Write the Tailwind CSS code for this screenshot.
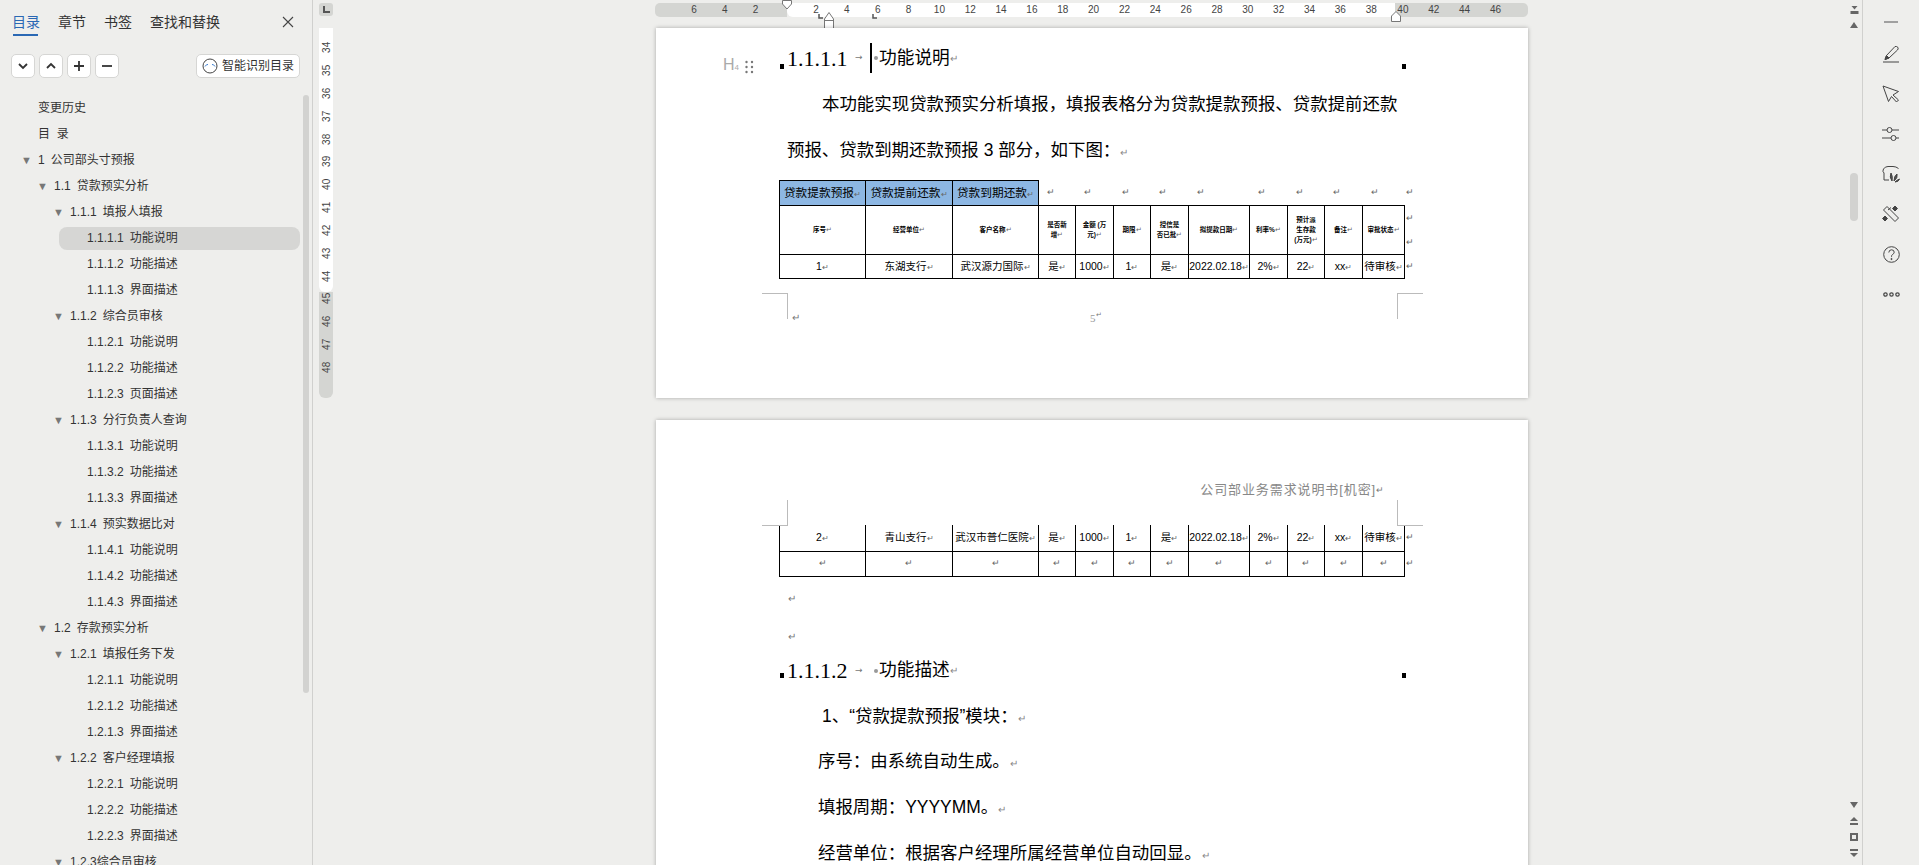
<!DOCTYPE html>
<html lang="zh-CN">
<head>
<meta charset="UTF-8">
<title>公司部业务需求说明书</title>
<script src="https://cdn.jsdelivr.net/npm/@tailwindcss/browser@4"></script>
</head>
<body class="bg-[#eeeeec] text-[#333] [font-family:'Liberation_Sans','Noto_Sans_CJK_SC',sans-serif]">
<div class="flex h-[865px] w-[1919px] overflow-hidden">

  <!-- left outline panel -->
  <aside class="relative w-[313px] shrink-0 border-r border-[#d0d0ce] overflow-hidden">
    <div class="flex h-[36px] gap-[18px] pl-[12px] text-[14px]">
      <div class="relative pt-[12px] leading-[20px] text-[#2a68b4]">目录<div class="absolute left-[1px] right-[2px] bottom-0 h-[2px] bg-[#2a68b4]"></div></div>
      <div class="pt-[12px] leading-[20px]">章节</div>
      <div class="pt-[12px] leading-[20px]">书签</div>
      <div class="pt-[12px] leading-[20px]">查找和替换</div>
      <svg class="ml-[44px] mt-[16px]" width="12" height="12" viewBox="0 0 12 12"><path d="M1 1L11 11M11 1L1 11" stroke="#444" stroke-width="1.1"/></svg>
    </div>
    <div class="mt-[18px] flex h-[24px] pl-[11px] pr-[12px] gap-[4px]">
      <div class="flex w-[24px] items-center justify-center rounded-[5px] border border-[#d6d6d4] bg-white"><svg width="12" height="12" viewBox="0 0 12 12"><path d="M2 4L6 8L10 4" fill="none" stroke="#333" stroke-width="1.8"/></svg></div>
      <div class="flex w-[24px] items-center justify-center rounded-[5px] border border-[#d6d6d4] bg-white"><svg width="12" height="12" viewBox="0 0 12 12"><path d="M2 8L6 4L10 8" fill="none" stroke="#333" stroke-width="1.8"/></svg></div>
      <div class="flex w-[24px] items-center justify-center rounded-[5px] border border-[#d6d6d4] bg-white"><svg width="12" height="12" viewBox="0 0 12 12"><path d="M1 6H11M6 1V11" stroke="#333" stroke-width="1.8"/></svg></div>
      <div class="flex w-[24px] items-center justify-center rounded-[5px] border border-[#d6d6d4] bg-white"><svg width="12" height="12" viewBox="0 0 12 12"><path d="M1 6H11" stroke="#333" stroke-width="1.8"/></svg></div>
      <div class="ml-auto flex w-[104px] items-center gap-[4px] rounded-[5px] border border-[#d6d6d4] bg-white pl-[5px] text-[12px]">
        <svg width="16" height="16" viewBox="0 0 16 16"><circle cx="8" cy="8" r="7" fill="none" stroke="#444" stroke-width="1"/><path d="M3 8.5Q4.5 6 6 6.5M10 6.5Q11.5 6 13 8.5" fill="none" stroke="#3d7fd0" stroke-width="1"/></svg>
        <span>智能识别目录</span>
      </div>
    </div>
    <div class="mt-[17px] text-[12px]">
      <div class="flex h-[26.02px] items-center pl-[38px]">变更历史</div>
      <div class="flex h-[26.02px] items-center pl-[38px]">目&nbsp;&nbsp;录</div>
      <div class="flex h-[26.02px] items-center pl-[21px]"><span class="mr-[6px] w-[11px] text-center text-[11px] text-[#777]">▼</span><span class="mr-[6px]">1</span>公司部头寸预报</div>
      <div class="flex h-[26.02px] items-center pl-[37px]"><span class="mr-[6px] w-[11px] text-center text-[11px] text-[#777]">▼</span><span class="mr-[6px]">1.1</span>贷款预实分析</div>
      <div class="flex h-[26.02px] items-center pl-[53px]"><span class="mr-[6px] w-[11px] text-center text-[11px] text-[#777]">▼</span><span class="mr-[6px]">1.1.1</span>填报人填报</div>
      <div class="flex h-[26.02px] items-center"><div class="ml-[59px] flex h-[23px] w-[241px] items-center rounded-lg bg-[#d6d6d4] pl-[28px]"><span class="mr-[6px]">1.1.1.1</span>功能说明</div></div>
      <div class="flex h-[26.02px] items-center pl-[87px]"><span class="mr-[6px]">1.1.1.2</span>功能描述</div>
      <div class="flex h-[26.02px] items-center pl-[87px]"><span class="mr-[6px]">1.1.1.3</span>界面描述</div>
      <div class="flex h-[26.02px] items-center pl-[53px]"><span class="mr-[6px] w-[11px] text-center text-[11px] text-[#777]">▼</span><span class="mr-[6px]">1.1.2</span>综合员审核</div>
      <div class="flex h-[26.02px] items-center pl-[87px]"><span class="mr-[6px]">1.1.2.1</span>功能说明</div>
      <div class="flex h-[26.02px] items-center pl-[87px]"><span class="mr-[6px]">1.1.2.2</span>功能描述</div>
      <div class="flex h-[26.02px] items-center pl-[87px]"><span class="mr-[6px]">1.1.2.3</span>页面描述</div>
      <div class="flex h-[26.02px] items-center pl-[53px]"><span class="mr-[6px] w-[11px] text-center text-[11px] text-[#777]">▼</span><span class="mr-[6px]">1.1.3</span>分行负责人查询</div>
      <div class="flex h-[26.02px] items-center pl-[87px]"><span class="mr-[6px]">1.1.3.1</span>功能说明</div>
      <div class="flex h-[26.02px] items-center pl-[87px]"><span class="mr-[6px]">1.1.3.2</span>功能描述</div>
      <div class="flex h-[26.02px] items-center pl-[87px]"><span class="mr-[6px]">1.1.3.3</span>界面描述</div>
      <div class="flex h-[26.02px] items-center pl-[53px]"><span class="mr-[6px] w-[11px] text-center text-[11px] text-[#777]">▼</span><span class="mr-[6px]">1.1.4</span>预实数据比对</div>
      <div class="flex h-[26.02px] items-center pl-[87px]"><span class="mr-[6px]">1.1.4.1</span>功能说明</div>
      <div class="flex h-[26.02px] items-center pl-[87px]"><span class="mr-[6px]">1.1.4.2</span>功能描述</div>
      <div class="flex h-[26.02px] items-center pl-[87px]"><span class="mr-[6px]">1.1.4.3</span>界面描述</div>
      <div class="flex h-[26.02px] items-center pl-[37px]"><span class="mr-[6px] w-[11px] text-center text-[11px] text-[#777]">▼</span><span class="mr-[6px]">1.2</span>存款预实分析</div>
      <div class="flex h-[26.02px] items-center pl-[53px]"><span class="mr-[6px] w-[11px] text-center text-[11px] text-[#777]">▼</span><span class="mr-[6px]">1.2.1</span>填报任务下发</div>
      <div class="flex h-[26.02px] items-center pl-[87px]"><span class="mr-[6px]">1.2.1.1</span>功能说明</div>
      <div class="flex h-[26.02px] items-center pl-[87px]"><span class="mr-[6px]">1.2.1.2</span>功能描述</div>
      <div class="flex h-[26.02px] items-center pl-[87px]"><span class="mr-[6px]">1.2.1.3</span>界面描述</div>
      <div class="flex h-[26.02px] items-center pl-[53px]"><span class="mr-[6px] w-[11px] text-center text-[11px] text-[#777]">▼</span><span class="mr-[6px]">1.2.2</span>客户经理填报</div>
      <div class="flex h-[26.02px] items-center pl-[87px]"><span class="mr-[6px]">1.2.2.1</span>功能说明</div>
      <div class="flex h-[26.02px] items-center pl-[87px]"><span class="mr-[6px]">1.2.2.2</span>功能描述</div>
      <div class="flex h-[26.02px] items-center pl-[87px]"><span class="mr-[6px]">1.2.2.3</span>界面描述</div>
      <div class="flex h-[26.02px] items-center pl-[53px]"><span class="mr-[6px] w-[11px] text-center text-[11px] text-[#777]">▼</span>1.2.3综合员审核</div>
    </div>
    <div class="absolute left-[303px] top-[95px] h-[598px] w-[6px] rounded-full bg-[#d2d2d0]"></div>
  </aside>

  <!-- vertical ruler -->
  <div class="ml-[6px] w-[14px] shrink-0 pt-[3px] text-[10px] text-[#444]">
    <div class="flex h-[13px] items-center justify-center rounded-[3px] bg-[#d4d5d2]"><svg width="7" height="7" viewBox="0 0 7 7"><path d="M1 0V6H7" fill="none" stroke="#555" stroke-width="2"/></svg></div>
    <div class="mt-[12px] flex h-[264px] flex-col items-center overflow-hidden rounded-b-[6px] bg-white pt-[8px]">
      <div class="flex h-[22.9px] shrink-0 items-center justify-center [writing-mode:vertical-rl] rotate-180">34</div>
      <div class="flex h-[22.9px] shrink-0 items-center justify-center [writing-mode:vertical-rl] rotate-180">35</div>
      <div class="flex h-[22.9px] shrink-0 items-center justify-center [writing-mode:vertical-rl] rotate-180">36</div>
      <div class="flex h-[22.9px] shrink-0 items-center justify-center [writing-mode:vertical-rl] rotate-180">37</div>
      <div class="flex h-[22.9px] shrink-0 items-center justify-center [writing-mode:vertical-rl] rotate-180">38</div>
      <div class="flex h-[22.9px] shrink-0 items-center justify-center [writing-mode:vertical-rl] rotate-180">39</div>
      <div class="flex h-[22.9px] shrink-0 items-center justify-center [writing-mode:vertical-rl] rotate-180">40</div>
      <div class="flex h-[22.9px] shrink-0 items-center justify-center [writing-mode:vertical-rl] rotate-180">41</div>
      <div class="flex h-[22.9px] shrink-0 items-center justify-center [writing-mode:vertical-rl] rotate-180">42</div>
      <div class="flex h-[22.9px] shrink-0 items-center justify-center [writing-mode:vertical-rl] rotate-180">43</div>
      <div class="flex h-[22.9px] shrink-0 items-center justify-center [writing-mode:vertical-rl] rotate-180">44</div>
    </div>
    <div class="flex h-[106px] flex-col items-center rounded-b-[6px] bg-[#d4d5d2]">
      <div class="-mt-[5px] flex h-[22.9px] shrink-0 items-center justify-center [writing-mode:vertical-rl] rotate-180">45</div>
      <div class="flex h-[22.9px] shrink-0 items-center justify-center [writing-mode:vertical-rl] rotate-180">46</div>
      <div class="flex h-[22.9px] shrink-0 items-center justify-center [writing-mode:vertical-rl] rotate-180">47</div>
      <div class="flex h-[22.9px] shrink-0 items-center justify-center [writing-mode:vertical-rl] rotate-180">48</div>
    </div>
  </div>

  <!-- document area -->
  <main class="min-w-0 flex-1 overflow-hidden pl-[323px] pt-[3px]">
    <div class="relative -ml-[1px] flex h-[14px] w-[873px] text-[10px] leading-[14px] text-[#444]">
      <div class="flex w-[132px] rounded-l-[5px] bg-[#d4d5d2] pl-[23.5px] text-center">
        <span class="w-[30.85px]">6</span><span class="w-[30.85px]">4</span><span class="w-[30.85px]">2</span>
      </div>
      <div class="flex w-[608px] rounded-l-[6px] bg-white pl-[13.6px] text-center">
        <span class="w-[30.85px] shrink-0">2</span><span class="w-[30.85px] shrink-0">4</span><span class="w-[30.85px] shrink-0">6</span><span class="w-[30.85px] shrink-0">8</span><span class="w-[30.85px] shrink-0">10</span><span class="w-[30.85px] shrink-0">12</span><span class="w-[30.85px] shrink-0">14</span><span class="w-[30.85px] shrink-0">16</span><span class="w-[30.85px] shrink-0">18</span><span class="w-[30.85px] shrink-0">20</span><span class="w-[30.85px] shrink-0">22</span><span class="w-[30.85px] shrink-0">24</span><span class="w-[30.85px] shrink-0">26</span><span class="w-[30.85px] shrink-0">28</span><span class="w-[30.85px] shrink-0">30</span><span class="w-[30.85px] shrink-0">32</span><span class="w-[30.85px] shrink-0">34</span><span class="w-[30.85px] shrink-0">36</span><span class="w-[30.85px] shrink-0">38</span>
      </div>
      <div class="flex flex-1 rounded-r-[5px] bg-[#d4d5d2] text-center">
        <span class="-ml-[7.5px] w-[30.85px] shrink-0">40</span><span class="w-[30.85px] shrink-0">42</span><span class="w-[30.85px] shrink-0">44</span><span class="w-[30.85px] shrink-0">46</span>
      </div>
      <!-- indent markers -->
      <svg class="absolute left-[126px] -top-[3px]" width="12" height="10" viewBox="0 0 12 10"><path d="M1.5 .5H10.5V4L6 9L1.5 4Z" fill="#fff" stroke="#777"/></svg>
      <svg class="absolute left-[163px] top-[11px]" width="5" height="5" viewBox="0 0 5 5"><path d="M1 0V4H5" fill="none" stroke="#555" stroke-width="1.5"/></svg>
      <svg class="absolute left-[168px] top-[8px]" width="12" height="19" viewBox="0 0 12 19"><path d="M1.5 8L6 1.5L10.5 8V18H1.5ZM1.5 9.5H10.5" fill="#fff" stroke="#777"/></svg>
      <svg class="absolute left-[217px] top-[11px]" width="5" height="5" viewBox="0 0 5 5"><path d="M1 0V4H5" fill="none" stroke="#555" stroke-width="1.5"/></svg>
      <svg class="absolute left-[735px] top-[8px]" width="12" height="11" viewBox="0 0 12 11"><path d="M1.5 10.5V5L6 .5L10.5 5V10.5Z" fill="#fff" stroke="#777"/></svg>
    </div>

    <!-- page 1 -->
    <section class="relative mt-[11px] h-[370px] w-[872px] bg-white pl-[131px] pt-[12px] shadow-[0_0_4px_rgba(0,0,0,0.3)]">
      <div class="absolute left-[67px] top-[29px] flex items-center gap-[6px]">
        <span class="font-light text-[16px] leading-[16px] text-[#aaa]">H<span class="text-[8px]">4</span></span>
        <svg width="9" height="14" viewBox="0 0 9 14"><g fill="#777"><circle cx="1.5" cy="2" r="1.2"/><circle cx="7" cy="2" r="1.2"/><circle cx="1.5" cy="7" r="1.2"/><circle cx="7" cy="7" r="1.2"/><circle cx="1.5" cy="12" r="1.2"/><circle cx="7" cy="12" r="1.2"/></g></svg>
      </div>
      <div class="flex h-[36px] items-center text-black">
        <span class="w-[65px] [font-family:'Liberation_Serif',serif] text-[22px]">1.1.1.1</span>
        <span class="w-[18px] pl-[3px] text-[9px] text-[#777] [font-family:'DejaVu_Sans',sans-serif]">→</span>
        <span class="h-[30px] w-[2px] bg-black"></span>
        <span class="ml-[2px] mr-[1px] h-[4px] w-[4px] rounded-full bg-[#999]"></span>
        <span class="text-[17.7px]">功能说明</span><span class="text-[10px] text-[#888]">↵</span>
      </div>
      <div class="h-[5px]"></div>
      <p class="w-[620px] text-[17.45px] leading-[46px] text-black [text-indent:35px]">本功能实现贷款预实分析填报，填报表格分为贷款提款预报、贷款提前还款预报、贷款到期还款预报 3 部分，如下图：<span class="text-[10px] leading-none text-[#888]">↵</span></p>
      <table class="-ml-[8px] mt-[7px] w-[641px] table-fixed border-collapse text-center text-black">
        <colgroup><col class="w-[86px]"><col class="w-[87px]"><col class="w-[86px]"><col class="w-[37px]"><col class="w-[38px]"><col class="w-[37px]"><col class="w-[38px]"><col class="w-[61px]"><col class="w-[38px]"><col class="w-[37px]"><col class="w-[38px]"><col class="w-[42px]"><col class="w-[16px]"></colgroup>
        <tr class="h-[25px] text-[11.7px] whitespace-nowrap">
          <td class="overflow-hidden border border-black bg-[#8db7e3]">贷款提款预报<span class="text-[8px] text-[#666]">↵</span></td>
          <td class="overflow-hidden border border-black bg-[#8db7e3]">贷款提前还款<span class="text-[8px] text-[#666]">↵</span></td>
          <td class="overflow-hidden border border-black bg-[#8db7e3]">贷款到期还款<span class="text-[8px] text-[#666]">↵</span></td>
          <td class="pl-[8px] text-left text-[9px] text-[#666]">↵</td>
          <td class="pl-[8px] text-left text-[9px] text-[#666]">↵</td>
          <td class="pl-[8px] text-left text-[9px] text-[#666]">↵</td>
          <td class="pl-[8px] text-left text-[9px] text-[#666]">↵</td>
          <td class="pl-[8px] text-left text-[9px] text-[#666]">↵</td>
          <td class="pl-[8px] text-left text-[9px] text-[#666]">↵</td>
          <td class="pl-[8px] text-left text-[9px] text-[#666]">↵</td>
          <td class="pl-[8px] text-left text-[9px] text-[#666]">↵</td>
          <td class="pl-[8px] text-left text-[9px] text-[#666]">↵</td>
          <td class="pl-[1px] text-left text-[9px] text-[#666]">↵</td>
        </tr>
        <tr class="h-[49px] text-[6.5px] font-bold leading-[10px]">
          <td class="border border-black">序号<span class="font-normal text-[#666]">↵</span></td>
          <td class="border border-black">经营单位<span class="font-normal text-[#666]">↵</span></td>
          <td class="border border-black">客户名称<span class="font-normal text-[#666]">↵</span></td>
          <td class="border border-black">是否新<br>增<span class="font-normal text-[#666]">↵</span></td>
          <td class="border border-black">金额 (万<br>元)<span class="font-normal text-[#666]">↵</span></td>
          <td class="border border-black">期限<span class="font-normal text-[#666]">↵</span></td>
          <td class="border border-black">授信是<br>否已批<span class="font-normal text-[#666]">↵</span></td>
          <td class="border border-black">拟提款日期<span class="font-normal text-[#666]">↵</span></td>
          <td class="border border-black">利率%<span class="font-normal text-[#666]">↵</span></td>
          <td class="border border-black">预计派<br>生存款<br>(万元)<span class="font-normal text-[#666]">↵</span></td>
          <td class="border border-black">备注<span class="font-normal text-[#666]">↵</span></td>
          <td class="border border-black">审批状态<span class="font-normal text-[#666]">↵</span></td>
          <td class="pl-[1px] text-left text-[9px] font-normal leading-[24px] text-[#666]">↵<br>↵</td>
        </tr>
        <tr class="h-[24px] text-[10.5px] whitespace-nowrap">
          <td class="border border-black">1<span class="text-[8px] text-[#666]">↵</span></td>
          <td class="border border-black">东湖支行<span class="text-[8px] text-[#666]">↵</span></td>
          <td class="border border-black">武汉源力国际<span class="text-[8px] text-[#666]">↵</span></td>
          <td class="border border-black">是<span class="text-[8px] text-[#666]">↵</span></td>
          <td class="border border-black">1000<span class="text-[8px] text-[#666]">↵</span></td>
          <td class="border border-black">1<span class="text-[8px] text-[#666]">↵</span></td>
          <td class="border border-black">是<span class="text-[8px] text-[#666]">↵</span></td>
          <td class="border border-black">2022.02.18<span class="text-[8px] text-[#666]">↵</span></td>
          <td class="border border-black">2%<span class="text-[8px] text-[#666]">↵</span></td>
          <td class="border border-black">22<span class="text-[8px] text-[#666]">↵</span></td>
          <td class="border border-black">xx<span class="text-[8px] text-[#666]">↵</span></td>
          <td class="overflow-hidden border border-black">待审核<span class="text-[8px] text-[#666]">↵</span></td>
          <td class="pl-[1px] text-left text-[9px] text-[#666]">↵</td>
        </tr>
      </table>
      <div class="mt-[31px] flex w-[620px] text-[10px] text-[#777]"><span class="ml-[5px]">↵</span><span class="ml-[290px] [font-family:'Liberation_Serif',serif] text-[11px] text-[#999]">5</span><span class="text-[7px]">↵</span></div>
      <!-- crop marks -->
      <div class="absolute left-[106px] top-[265px] h-[26px] w-[26px] border-r border-t border-[#bbb]"></div>
      <div class="absolute left-[741px] top-[265px] h-[26px] w-[26px] border-l border-t border-[#bbb]"></div>
      <div class="absolute left-[124px] top-[36px] h-[5px] w-[4px] bg-black"></div>
      <div class="absolute left-[746px] top-[36px] h-[5px] w-[4px] bg-black"></div>
    </section>

    <!-- page 2 -->
    <section class="relative mt-[22px] h-[500px] w-[872px] bg-white pl-[123px] shadow-[0_0_4px_rgba(0,0,0,0.3)]">
      <div class="flex h-[105px] w-[606px] justify-end pt-[60px] text-[13px] leading-[20px] tracking-[0.9px] text-[#888]">公司部业务需求说明书[机密]<span class="text-[9px] text-[#777]">↵</span></div>
      <table class="w-[641px] table-fixed border-collapse text-center text-black">
        <colgroup><col class="w-[86px]"><col class="w-[87px]"><col class="w-[86px]"><col class="w-[37px]"><col class="w-[38px]"><col class="w-[37px]"><col class="w-[38px]"><col class="w-[61px]"><col class="w-[38px]"><col class="w-[37px]"><col class="w-[38px]"><col class="w-[42px]"><col class="w-[16px]"></colgroup>
        <tr class="h-[26px] text-[10.5px] whitespace-nowrap">
          <td class="border border-t-0 border-black">2<span class="text-[8px] text-[#666]">↵</span></td>
          <td class="border border-t-0 border-black">青山支行<span class="text-[8px] text-[#666]">↵</span></td>
          <td class="border border-t-0 border-black">武汉市普仁医院<span class="text-[8px] text-[#666]">↵</span></td>
          <td class="border border-t-0 border-black">是<span class="text-[8px] text-[#666]">↵</span></td>
          <td class="border border-t-0 border-black">1000<span class="text-[8px] text-[#666]">↵</span></td>
          <td class="border border-t-0 border-black">1<span class="text-[8px] text-[#666]">↵</span></td>
          <td class="border border-t-0 border-black">是<span class="text-[8px] text-[#666]">↵</span></td>
          <td class="border border-t-0 border-black">2022.02.18<span class="text-[8px] text-[#666]">↵</span></td>
          <td class="border border-t-0 border-black">2%<span class="text-[8px] text-[#666]">↵</span></td>
          <td class="border border-t-0 border-black">22<span class="text-[8px] text-[#666]">↵</span></td>
          <td class="border border-t-0 border-black">xx<span class="text-[8px] text-[#666]">↵</span></td>
          <td class="overflow-hidden border border-t-0 border-black">待审核<span class="text-[8px] text-[#666]">↵</span></td>
          <td class="pl-[1px] text-left text-[9px] text-[#666]">↵</td>
        </tr>
        <tr class="h-[25px] text-[9px] text-[#666]">
          <td class="border border-black">↵</td><td class="border border-black">↵</td><td class="border border-black">↵</td><td class="border border-black">↵</td><td class="border border-black">↵</td><td class="border border-black">↵</td><td class="border border-black">↵</td><td class="border border-black">↵</td><td class="border border-black">↵</td><td class="border border-black">↵</td><td class="border border-black">↵</td><td class="border border-black">↵</td>
          <td class="pl-[1px] text-left">↵</td>
        </tr>
      </table>
      <div class="pl-[9px] text-[10px] text-[#777]">
        <div class="flex h-[29px] items-end">↵</div>
        <div class="flex h-[38px] items-end">↵</div>
      </div>
      <div class="mt-[9px] flex h-[36px] items-center pl-[8px] text-black">
        <span class="w-[65px] [font-family:'Liberation_Serif',serif] text-[22px]">1.1.1.2</span>
        <span class="w-[18px] pl-[3px] text-[9px] text-[#777] [font-family:'DejaVu_Sans',sans-serif]">→</span>
        <span class="w-[2px]"></span>
        <span class="ml-[2px] mr-[1px] h-[4px] w-[4px] rounded-full bg-[#999]"></span>
        <span class="text-[17.7px]">功能描述</span><span class="text-[10px] text-[#888]">↵</span>
      </div>
      <div class="mt-[5px] text-[17.45px] leading-[45.7px] text-black">
        <div class="pl-[43px]">1、“贷款提款预报”模块：<span class="text-[10px] leading-none text-[#888]">↵</span></div>
        <div class="pl-[39px]">序号：由系统自动生成。<span class="text-[10px] leading-none text-[#888]">↵</span></div>
        <div class="pl-[39px]">填报周期：YYYYMM。<span class="text-[10px] leading-none text-[#888]">↵</span></div>
        <div class="pl-[39px]">经营单位：根据客户经理所属经营单位自动回显。<span class="text-[10px] leading-none text-[#888]">↵</span></div>
      </div>
      <!-- crop marks -->
      <div class="absolute left-[106px] top-[80px] h-[26px] w-[26px] border-r border-b border-[#bbb]"></div>
      <div class="absolute left-[741px] top-[80px] h-[26px] w-[26px] border-l border-b border-[#bbb]"></div>
      <div class="absolute left-[124px] top-[253px] h-[5px] w-[4px] bg-black"></div>
      <div class="absolute left-[746px] top-[253px] h-[5px] w-[4px] bg-black"></div>
    </section>
  </main>

  <!-- document scrollbar -->
  <div class="flex w-[16px] shrink-0 flex-col items-center">
    <svg class="mt-[6px]" width="9" height="9" viewBox="0 0 9 9"><path d="M1.5 0H7.5L4.5 3.5ZM.5 5H8.5V8H.5Z" fill="#666"/></svg>
    <svg class="mt-[7px]" width="8" height="6" viewBox="0 0 8 6"><path d="M4 0L8 6H0Z" fill="#666"/></svg>
    <div class="mt-[145px] h-[48px] w-[8px] rounded-full bg-[#d2d2d0]"></div>
    <svg class="mt-auto" width="8" height="6" viewBox="0 0 8 6"><path d="M0 0H8L4 6Z" fill="#666"/></svg>
    <svg class="mt-[9px]" width="8" height="9" viewBox="0 0 8 9"><path d="M4 0L8 4H0ZM0 6H8V8H0Z" fill="#666"/></svg>
    <svg class="mt-[7px]" width="8" height="8" viewBox="0 0 8 8"><rect x="1" y="1" width="6" height="6" fill="none" stroke="#666" stroke-width="2"/></svg>
    <svg class="mb-[8px] mt-[7px]" width="8" height="9" viewBox="0 0 8 9"><path d="M0 1H8V3H0ZM0 5H8L4 9Z" fill="#666"/></svg>
  </div>

  <!-- right rail -->
  <div class="flex w-[57px] shrink-0 flex-col items-center border-l border-[#d0d0ce]">
    <div class="flex h-[34px] items-start pt-[21px]"><div class="h-[2px] w-[14px] bg-[#a0a0a0]"></div></div>
    <div class="flex h-[40px] items-center"><svg width="18" height="18" viewBox="0 0 18 18" fill="none" stroke="#444"><path d="M1 17H17M3 14.5L4.5 10.5L13 1.5Q14.5 1 16 2.5Q16.5 4 15.5 5L7 13Z"/><path d="M3 14.5L7 13L4.5 10.5Z" fill="#444"/></svg></div>
    <div class="flex h-[40px] items-center"><svg width="18" height="18" viewBox="0 0 18 18" fill="none" stroke="#444"><path d="M1 1L16.5 6.5L11 10L16.5 15L14.5 17L9.5 11.5L6.5 16.5Z"/></svg></div>
    <div class="flex h-[40px] items-center"><svg width="18" height="16" viewBox="0 0 18 16" fill="none" stroke="#444"><path d="M0 4H5M10 4H17M0 12H9M14 12H17"/><circle cx="7.5" cy="4" r="2.5"/><circle cx="11.5" cy="12" r="2.5"/></svg></div>
    <div class="flex h-[40px] items-center"><svg width="18" height="18" viewBox="0 0 18 18" fill="none" stroke="#444"><path d="M7 15H2V8Q0 6.5 1.5 4Q3 1.5 6 1.5H11Q14 1.5 16.5 3.5"/><path d="M10 16Q7 12 9 8Q11 11 10 16ZM12 16Q12 11 15 9Q16 13 12 16ZM13 17Q15 15 17.5 14Q16.5 17 13 17Z" fill="#555"/></svg></div>
    <div class="flex h-[40px] items-center"><svg width="18" height="18" viewBox="0 0 18 18" fill="none" stroke="#444"><path d="M5 1.5L16.5 13L13 16.5L1.5 5Z"/><path d="M6 5L9 2.5M13 1L15.5 3.5L13 6L10.5 3.5ZM3 11L5.5 13.5L3 16L.5 13.5Z" fill="#444"/></svg></div>
    <div class="flex h-[40px] items-center"><svg width="17" height="17" viewBox="0 0 17 17" fill="none" stroke="#444"><circle cx="8.5" cy="8.5" r="7.8"/><path d="M5.8 6.5Q6 3.8 8.5 3.8Q11.2 3.8 11.2 6.2Q11.2 7.6 9.5 8.5Q8.5 9 8.5 10.8"/><circle cx="8.5" cy="13" r=".6" fill="#444"/></svg></div>
    <div class="flex h-[40px] items-center"><svg width="17" height="5" viewBox="0 0 17 5" fill="none" stroke="#444" stroke-width="1.2"><circle cx="2.5" cy="2.5" r="1.7"/><circle cx="8.5" cy="2.5" r="1.7"/><circle cx="14.5" cy="2.5" r="1.7"/></svg></div>
  </div>
</div>
</body>
</html>
